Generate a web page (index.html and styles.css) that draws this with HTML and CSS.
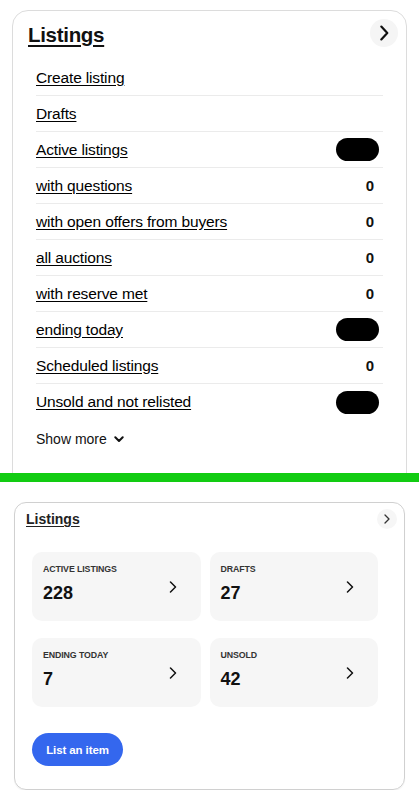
FILE: index.html
```html
<!DOCTYPE html>
<html lang="en">
<head>
<meta charset="utf-8">
<title>Listings</title>
<link rel="stylesheet" href="styles.css">
</head>
<body>
<div class="top">
  <section class="card-a">
    <header class="a-head">
      <a class="a-title" href="#">Listings</a>
      <span class="circle-btn">
        <svg width="16" height="16" viewBox="0 0 16 16"><path d="M5.3 1.6 L11.3 8 L5.3 14.4" fill="none" stroke="#111" stroke-width="2.2" stroke-linecap="round" stroke-linejoin="round"/></svg>
      </span>
    </header>
    <ul class="a-list">
      <li class="a-row"><a href="#">Create listing</a></li>
      <li class="a-row"><a href="#">Drafts</a></li>
      <li class="a-row"><a href="#">Active listings</a><span class="pill"></span></li>
      <li class="a-row"><a href="#">with questions</a><span class="num">0</span></li>
      <li class="a-row"><a href="#">with open offers from buyers</a><span class="num">0</span></li>
      <li class="a-row"><a href="#">all auctions</a><span class="num">0</span></li>
      <li class="a-row"><a href="#">with reserve met</a><span class="num">0</span></li>
      <li class="a-row"><a href="#">ending today</a><span class="pill"></span></li>
      <li class="a-row"><a href="#">Scheduled listings</a><span class="num">0</span></li>
      <li class="a-row"><a href="#">Unsold and not relisted</a><span class="pill"></span></li>
    </ul>
    <button class="show-more">Show more
      <svg width="10" height="7" viewBox="0 0 10 7"><path d="M1.3 1.3 L5 5 L8.7 1.3" fill="none" stroke="#111" stroke-width="2" stroke-linecap="round" stroke-linejoin="round"/></svg>
    </button>
  </section>
</div>
<div class="divider"></div>
<div class="bottom">
  <section class="card-b">
    <header class="b-head">
      <a class="b-title" href="#">Listings</a>
      <span class="circle-sm">
        <svg width="10" height="10" viewBox="0 0 10 10"><path d="M3 1 L7 5 L3 9" fill="none" stroke="#333" stroke-width="1.3" stroke-linecap="round" stroke-linejoin="round"/></svg>
      </span>
    </header>
    <div class="tiles">
      <a class="tile" href="#">
        <div class="tile-text"><div class="tile-label">ACTIVE LISTINGS</div><div class="tile-value">228</div></div>
        <svg class="tile-chev" width="12" height="12" viewBox="0 0 12 12"><path d="M3.5 1 L8.5 6 L3.5 11" fill="none" stroke="#111" stroke-width="1.5" stroke-linecap="round" stroke-linejoin="round"/></svg>
      </a>
      <a class="tile" href="#">
        <div class="tile-text"><div class="tile-label">DRAFTS</div><div class="tile-value">27</div></div>
        <svg class="tile-chev" width="12" height="12" viewBox="0 0 12 12"><path d="M3.5 1 L8.5 6 L3.5 11" fill="none" stroke="#111" stroke-width="1.5" stroke-linecap="round" stroke-linejoin="round"/></svg>
      </a>
      <a class="tile" href="#">
        <div class="tile-text"><div class="tile-label">ENDING TODAY</div><div class="tile-value">7</div></div>
        <svg class="tile-chev" width="12" height="12" viewBox="0 0 12 12"><path d="M3.5 1 L8.5 6 L3.5 11" fill="none" stroke="#111" stroke-width="1.5" stroke-linecap="round" stroke-linejoin="round"/></svg>
      </a>
      <a class="tile" href="#">
        <div class="tile-text"><div class="tile-label">UNSOLD</div><div class="tile-value">42</div></div>
        <svg class="tile-chev" width="12" height="12" viewBox="0 0 12 12"><path d="M3.5 1 L8.5 6 L3.5 11" fill="none" stroke="#111" stroke-width="1.5" stroke-linecap="round" stroke-linejoin="round"/></svg>
      </a>
    </div>
    <button class="list-btn">List an item</button>
  </section>
</div>
</body>
</html>
```
FILE: styles.css
```css
* { box-sizing: border-box; }
html, body { margin: 0; padding: 0; background: #fff; }
body {
  font-family: "Liberation Sans", Arial, sans-serif;
  color: #111;
  width: 419px;
}
a { color: #111; }

.top {
  height: 473px;
  overflow: hidden;
  padding-top: 10px;
}
.card-a {
  margin-left: 12px;
  width: 395px;
  height: 520px;
  border: 1px solid #dcdcdc;
  border-radius: 16px;
  padding: 8px 8px 0 15px;
}
.a-head {
  display: flex;
  align-items: center;
  justify-content: space-between;
  height: 28px;
  margin-bottom: 13px;
}
.a-title {
  font-size: 20.5px;
  font-weight: 700;
  text-decoration: underline;
  text-decoration-thickness: 2px;
  text-underline-offset: 3px;
  letter-spacing: -0.3px;
  margin-top: 3px;
}
.circle-btn {
  width: 28px;
  height: 28px;
  border-radius: 50%;
  background: #f5f5f5;
  display: flex;
  align-items: center;
  justify-content: center;
}
.a-list {
  list-style: none;
  margin: 0 15px 0 8px;
  padding: 0;
}
.a-row {
  display: flex;
  align-items: center;
  justify-content: space-between;
  height: 36px;
  border-bottom: 1px solid #ebebeb;
  padding-right: 4px;
  font-size: 15.5px;
  letter-spacing: -0.15px;
}
.a-row:last-child { border-bottom: none; }
.a-row a {
  color: #000;
  text-decoration: underline;
  text-underline-offset: 2px;
}
.num {
  margin-right: 5px;
  font-weight: 700;
  font-size: 15px;
}
.pill {
  width: 43px;
  height: 23px;
  border-radius: 12px;
  background: #000;
}
.show-more {
  margin: 9px 0 0 8px;
  padding: 0;
  border: none;
  background: none;
  font-family: inherit;
  font-size: 14px;
  color: #111;
  display: flex;
  align-items: center;
  gap: 7px;
  height: 20px;
}

.divider {
  height: 9px;
  background: #12cc12;
}

.bottom {
  padding-top: 20px;
}
.card-b {
  margin-left: 14px;
  width: 391px;
  border: 1px solid #d0d0d0;
  border-radius: 12px;
  padding: 6px 6px 23px 11px;
  box-shadow: 0 1px 1px rgba(0,0,0,0.06);
}
.b-head {
  display: flex;
  align-items: center;
  justify-content: space-between;
  height: 20px;
  margin-bottom: 23px;
}
.b-title {
  font-size: 14px;
  font-weight: 700;
  text-decoration: underline;
  text-underline-offset: 2px;
  color: #222;
}
.circle-sm {
  width: 20px;
  height: 20px;
  border-radius: 50%;
  background: #f6f6f6;
  display: flex;
  align-items: center;
  justify-content: center;
  margin-right: 1px;
}
.tiles {
  display: grid;
  grid-template-columns: 1fr 1fr;
  column-gap: 9px;
  row-gap: 17px;
  margin: 0 20px 0 6px;
}
.tile {
  display: flex;
  align-items: center;
  justify-content: space-between;
  height: 69px;
  background: #f6f6f6;
  border-radius: 10px;
  padding: 0 22px 0 11px;
  text-decoration: none;
}
.tile-text {
  display: flex;
  flex-direction: column;
  margin-bottom: 6px;
}
.tile-label {
  font-size: 8.8px;
  font-weight: 700;
  line-height: 11px;
  color: #333;
  letter-spacing: -0.1px;
}
.tile-value {
  font-size: 18px;
  font-weight: 700;
  line-height: 22px;
  margin-top: 7px;
}
.tile-chev { display: block; }
.list-btn {
  margin: 26px 0 0 6px;
  width: 91px;
  height: 33px;
  border: none;
  border-radius: 17px;
  background: #3467ee;
  color: #fff;
  font-family: inherit;
  font-size: 11.5px;
  font-weight: 700;
  letter-spacing: -0.1px;
  padding: 0;
}
```
